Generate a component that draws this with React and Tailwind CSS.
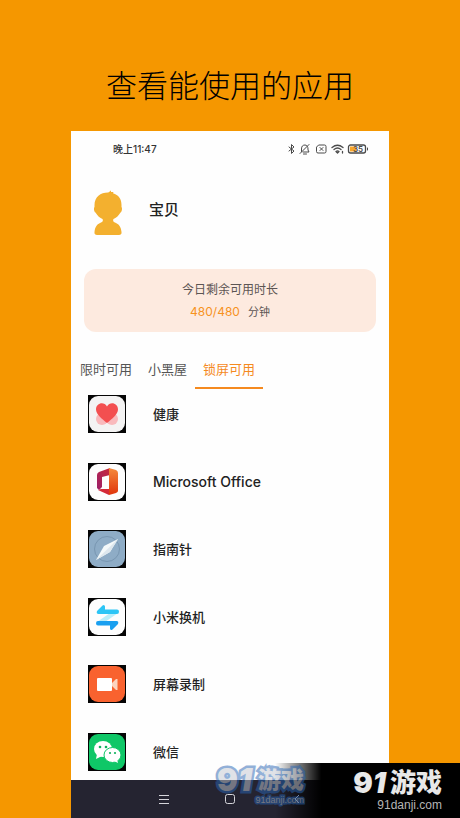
import React, { useState } from "react";

const HealthIcon = () => (
  <svg viewBox="0 0 38 38" className="w-full h-full" aria-hidden="true">
    <rect width="38" height="38" fill="#050505" />
    <rect x="1" y="1" width="36" height="36" rx="9" fill="#f4f3f3" />
    <circle cx="14" cy="24" r="6" fill="#f9b9bc" />
    <circle cx="24" cy="24" r="6" fill="#f9b9bc" />
    <path
      d="M19 28 C14 24 8 19 8 14.500 C8 8 16 6 19 11.500 C22 6 30 8 30 14.500 C30 19 24 24 19 28Z"
      fill="#f34f50"
    />
  </svg>
);

const OfficeIcon = () => (
  <svg viewBox="0 0 38 38" className="w-full h-full" aria-hidden="true">
    <defs>
      <linearGradient id="officeLeft" x1="1" y1="0" x2="0" y2="1">
        <stop offset="0" stopColor="#c8283a" />
        <stop offset="1" stopColor="#9b1f6a" />
      </linearGradient>
      <linearGradient id="officeRight" x1="0" y1="0" x2="0" y2="1">
        <stop offset="0" stopColor="#f58a3c" />
        <stop offset="1" stopColor="#e0340b" />
      </linearGradient>
    </defs>
    <rect width="38" height="38" fill="#050505" />
    <rect x="1" y="1" width="36" height="36" rx="9" fill="#fdfdfd" />
    <path d="M9 12 Q9 10 11 9 L22 5 V12 L14 14 V24 L11 27 L9 25Z" fill="url(#officeLeft)" />
    <path d="M21 5 L28 7 Q30 8 30 10 V28 Q30 29 28 30 L21 32Z" fill="url(#officeRight)" />
    <path d="M10 27 L13 26 H21 V32Z" fill="#d52a38" />
  </svg>
);

const CompassIcon = () => (
  <svg viewBox="0 0 38 38" className="w-full h-full" aria-hidden="true">
    <rect width="38" height="38" fill="#050505" />
    <rect x="1" y="1" width="36" height="36" rx="9" fill="#8eacc6" />
    <circle cx="19" cy="19" r="12.500" fill="none" stroke="#7896b1" />
    <path d="M8 30 L16 16 L30 9 L22 22Z" fill="#f4f9fa" />
    <path d="M8 30 L30 9 L22 22Z" fill="#dde7ee" />
  </svg>
);

const TransferIcon = () => (
  <svg viewBox="0 0 38 38" className="w-full h-full" aria-hidden="true">
    <rect width="38" height="38" fill="#050505" />
    <rect x="1" y="1" width="36" height="36" rx="9" fill="#fdfdfd" />
    <path d="M22 15 H30 L17 24 H9Z" fill="#b9eefa" />
    <path
      d="M14.500 7.500 L9 13 Q8 16 10.500 16 H29 Q31 16 31 13.700 Q31 11.500 29 11.500 H17 V8.500 Q16.500 6 14.500 7.500Z"
      fill="#2cc5f6"
    />
    <path
      d="M14.500 7.500 L9 13 Q8 16 10.500 16 H29 Q31 16 31 13.700 Q31 11.500 29 11.500 H17 V8.500 Q16.500 6 14.500 7.500Z"
      transform="rotate(180 19.500 19.500)"
      fill="#199ff0"
    />
  </svg>
);

const RecordIcon = () => (
  <svg viewBox="0 0 38 38" className="w-full h-full" aria-hidden="true">
    <rect width="38" height="38" fill="#050505" />
    <rect x="1" y="1" width="36" height="36" rx="9" fill="#f9622f" />
    <rect x="9" y="13" width="15" height="13" rx="1" fill="#fff" />
    <path d="M24 18 L28 14 H29.500 V25 H28 L24 21Z" fill="#fcd3bf" />
  </svg>
);

const WeChatIcon = () => (
  <svg viewBox="0 0 38 38" className="w-full h-full" aria-hidden="true">
    <rect width="38" height="38" fill="#050505" />
    <rect x="1" y="1" width="36" height="36" rx="9" fill="#0fc767" />
    <ellipse cx="15" cy="16" rx="9" ry="8" fill="#fff" />
    <path d="M9 21 L8 26 L14 23Z" fill="#fff" />
    <ellipse cx="24.500" cy="22" rx="8.500" ry="7.500" fill="#fff" stroke="#0fc767" />
    <path d="M26 28 L30 30 L29 26Z" fill="#fff" />
    <circle cx="12" cy="14" r="1.300" fill="#0fb15c" />
    <circle cx="18" cy="14" r="1.300" fill="#0fb15c" />
    <circle cx="22" cy="20" r="1.100" fill="#0fb15c" />
    <circle cx="27" cy="20" r="1.100" fill="#0fb15c" />
  </svg>
);

const Avatar = () => (
  <svg viewBox="0 0 30 46" className="w-[30px] h-[46px]" aria-hidden="true">
    <path
      d="M15 2.500 C16 2.500 17 1.500 17 0.500 C18 0.700 18 1.500 18 2 L20.500 2 L20 3.300 C25.500 5 28.500 9 28.500 15 V17 C29.500 18 29 22 27.500 22.500 C25.500 26 23 28 20.500 29 C19.500 30.500 20.500 32 22 32.500 C26 34 28 37 28.500 42 C29 44 27.500 45 26 45 H4 C2.500 45 1 44 1.500 42 C2 37 4 34 8 32.500 C9.500 32 10.500 30.500 9.500 29 C7 28 4.500 26 2.500 22.500 C1 22 0.500 18 1.500 17 V15 C1.500 7 7.500 2.500 15 2.500Z"
      fill="#f3b02f"
    />
  </svg>
);

const StatusIcons = () => (
  <svg
    viewBox="0 0 82 12"
    className="w-[82px] h-3"
    fill="none"
    stroke="#4a4a4a"
    strokeLinecap="round"
    strokeLinejoin="round"
    aria-hidden="true"
  >
    {/* Bluetooth */}
    <path d="M2 4 L7 8 L4.500 10.500 V1.500 L7 4 L2 8" />
    {/* Muted bell */}
    <path d="M14.500 8.500 V6 C14.500 3 16 2 18 2 C20 2 21 4 21 6 V7 L22 9 H16 M16.500 11 H19.500 M13 10.500 L22 1.500" />
    {/* No SIM */}
    <path d="M32 2 H37.500 Q39 2 39 3.500 V8.500 Q39 10 37.500 10 H31 Q29.500 10 29.500 8.500 V4.500Z" />
    <path d="M33 4.500 L36 7.500 M36 4.500 L33 7.500" />
    {/* Wifi */}
    <path
      d="M45 4.500 Q50.500 0 56 4.500 M47 6.500 Q50.500 3.500 54 6.500 M49 8.500 Q50.500 7.500 52 8.500 L50.500 10Z M55.500 8.500 V10"
      strokeWidth="1.300"
    />
    {/* Battery */}
    <rect x="61.500" y="2" width="17" height="8" rx="2" strokeWidth="1.300" />
    <rect x="63" y="3.500" width="6" height="5" fill="#f7a62b" stroke="none" />
    <path d="M80.500 5 V7" />
    <text
      x="71"
      y="9"
      textAnchor="middle"
      fontSize="8"
      fontWeight="600"
      fill="#4a4a4a"
      stroke="none"
    >
      35
    </text>
  </svg>
);

const tabs = ["限时可用", "小黑屋", "锁屏可用"];

const apps = [
  { name: "健康", Icon: HealthIcon },
  { name: "Microsoft Office", Icon: OfficeIcon, size: "text-sm" },
  { name: "指南针", Icon: CompassIcon },
  { name: "小米换机", Icon: TransferIcon },
  { name: "屏幕录制", Icon: RecordIcon },
  { name: "微信", Icon: WeChatIcon },
];

const App = () => {
  const [activeTab, setActiveTab] = useState("锁屏可用");

  return (
    <div className="relative min-h-screen flex flex-col bg-[#f59700] overflow-hidden font-['Inter','Noto_Sans_CJK_SC',sans-serif]">
      <h1 className="pt-16 pb-[23px] text-center text-[31px] leading-[44px] font-light text-black">
        查看能使用的应用
      </h1>

      <div className="flex-1 flex flex-col mx-[71px] bg-[#fefefe]">
        {/* Status bar */}
        <div className="flex items-center justify-between pt-2.5 pl-[42px] pr-5">
          <span className="text-[10px] leading-4 font-medium text-[#333]">晚上11:47</span>
          <StatusIcons />
        </div>

        {/* Profile */}
        <div className="flex items-center gap-[26px] pt-[33px] pl-[22px]">
          <Avatar />
          <span className="text-[15px] leading-5 font-medium text-[#222] pb-1.5">宝贝</span>
        </div>

        {/* Remaining time */}
        <div className="mt-[33px] mx-[13px] pt-[11px] pb-2.5 rounded-xl bg-[#fdeadf] text-center text-[#5c5553]">
          <p className="text-xs leading-5">今日剩余可用时长</p>
          <p className="flex items-center justify-center gap-2 leading-5 pt-0.5">
            <span className="text-xs text-[#f7921e]">480/480</span>
            <span className="text-[11px]">分钟</span>
          </p>
        </div>

        {/* Tabs */}
        <div className="flex mt-[25px] pl-px" role="tablist">
          {tabs.map((tab) => (
            <button
              key={tab}
              type="button"
              role="tab"
              aria-selected={activeTab === tab}
              onClick={() => setActiveTab(tab)}
              className={`px-2 pt-0.5 pb-2 text-[13px] leading-5 border-b-2 whitespace-nowrap cursor-pointer ${
                activeTab === tab
                  ? "text-[#f58a1f] border-[#f58a1f]"
                  : "text-[#555] border-transparent"
              }`}
            >
              {tab}
            </button>
          ))}
        </div>

        {/* App list */}
        <ul className="flex-1 flex flex-col justify-between gap-4 pt-1.5 pb-[9px] pl-[17px]">
          {apps.map(({ name, Icon, size = "text-[13px]" }) => (
            <li key={name} className="flex items-center gap-[27px]">
              <span className="w-[38px] h-[38px]">
                <Icon />
              </span>
              <span className={`${size} leading-5 font-medium text-[#222]`}>{name}</span>
            </li>
          ))}
        </ul>

        {/* System navigation */}
        <nav className="h-[38px] flex items-center justify-between px-[88px] bg-[#252431] text-[#d5d5da]">
          <button type="button" aria-label="菜单">
            <svg viewBox="0 0 10 10" className="w-2.5 h-2.5" stroke="currentColor" aria-hidden="true">
              <path d="M0 1.500 H10 M0 5.500 H10 M0 9.500 H10" />
            </svg>
          </button>
          <button type="button" aria-label="主页" className="relative z-10">
            <svg viewBox="0 0 10 10" className="w-2.5 h-2.5" fill="none" stroke="currentColor" aria-hidden="true">
              <rect x="0.500" y="0.500" width="9" height="9" rx="2" />
            </svg>
          </button>
          <button type="button" aria-label="返回" className="relative z-10 text-[#6f86ad]">
            <svg viewBox="0 0 10 10" className="w-2.5 h-2.5" fill="none" stroke="currentColor" aria-hidden="true">
              <path d="M8 1 L4 5 L8 9" />
            </svg>
          </button>
        </nav>
      </div>

      {/* Site banner */}
      <div className="absolute right-0 bottom-0 w-[185px] h-[55px] pt-1.5 pr-[18px] bg-linear-to-r from-transparent to-black to-25% text-[#e8e8e8] pointer-events-none">
        <p className="flex items-center justify-end gap-1 leading-7">
          <span className="text-[29px] font-black">
            9<i>1</i>
          </span>
          <span className="text-[26px] font-black">游戏</span>
        </p>
        <p className="text-right text-xs leading-4 text-[#b5b5b5] font-['Liberation_Sans',sans-serif]">
          91danji.com
        </p>
      </div>

      {/* Watermark */}
      <div
        className="absolute left-[213px] bottom-3 w-[91px] text-[#c3c8d2] opacity-50 pointer-events-none [paint-order:stroke_fill]"
        aria-hidden="true"
      >
        <p className="flex items-end justify-end gap-1.5 leading-7 [-webkit-text-stroke:5px_#2865b4]">
          <span className="text-[31px] font-black">
            9<i>1</i>
          </span>
          <span className="text-[23px] font-black">游戏</span>
        </p>
        <p className="text-right text-[9px] leading-3 font-['Liberation_Sans',sans-serif] [-webkit-text-stroke:3px_#2865b4]">
          91danji.com
        </p>
      </div>
    </div>
  );
};

export default App;
